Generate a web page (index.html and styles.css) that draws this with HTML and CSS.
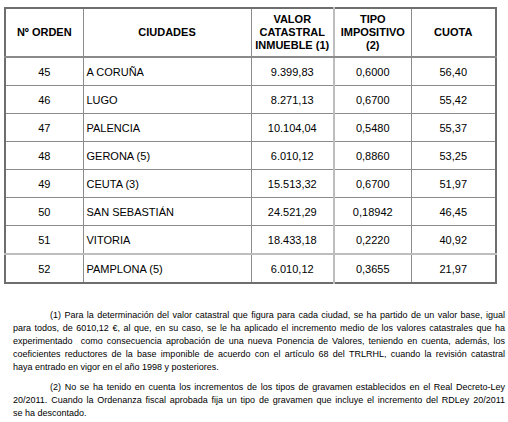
FILE: index.html
```html
<!DOCTYPE html>
<html>
<head>
<meta charset="utf-8">
<link rel="stylesheet" href="styles.css">
</head>
<body>
<div class="page">
<table class="tbl">
  <colgroup>
    <col class="c1"><col class="c2"><col class="c3"><col class="c4"><col class="c5">
  </colgroup>
  <thead>
    <tr>
      <th>Nº ORDEN</th>
      <th>CIUDADES</th>
      <th>VALOR<br>CATASTRAL<br>INMUEBLE (1)</th>
      <th class="sep">TIPO<br>IMPOSITIVO<br>(2)</th>
      <th>CUOTA</th>
    </tr>
  </thead>
  <tbody>
    <tr><td>45</td><td class="city">A CORUÑA</td><td>9.399,83</td><td class="sep">0,6000</td><td>56,40</td></tr>
    <tr><td>46</td><td class="city">LUGO</td><td>8.271,13</td><td class="sep">0,6700</td><td>55,42</td></tr>
    <tr><td>47</td><td class="city">PALENCIA</td><td>10.104,04</td><td class="sep">0,5480</td><td>55,37</td></tr>
    <tr><td>48</td><td class="city">GERONA (5)</td><td>6.010,12</td><td class="sep">0,8860</td><td>53,25</td></tr>
    <tr><td>49</td><td class="city">CEUTA (3)</td><td>15.513,32</td><td class="sep">0,6700</td><td>51,97</td></tr>
    <tr><td>50</td><td class="city">SAN SEBASTIÁN</td><td>24.521,29</td><td class="sep">0,18942</td><td>46,45</td></tr>
    <tr><td>51</td><td class="city">VITORIA</td><td>18.433,18</td><td class="sep">0,2220</td><td>40,92</td></tr>
    <tr class="last"><td>52</td><td class="city">PAMPLONA (5)</td><td>6.010,12</td><td class="sep">0,3655</td><td>21,97</td></tr>
  </tbody>
</table>
<div class="notes">
  <p class="note">
    <span class="ln first">(1) Para la determinación del valor catastral que figura para cada ciudad, se ha partido de un valor base, igual</span>
    <span class="ln">para todos, de 6010,12 €, al que, en su caso, se le ha aplicado el incremento medio de los valores catastrales que ha</span>
    <span class="ln">experimentado&nbsp; como consecuencia aprobación de una nueva Ponencia de Valores, teniendo en cuenta, además, los</span>
    <span class="ln">coeficientes reductores de la base imponible de acuerdo con el artículo 68 del TRLRHL, cuando la revisión catastral</span>
    <span class="ln end">haya entrado en vigor en el año 1998 y posteriores.</span>
  </p>
  <p class="note">
    <span class="ln first">(2) No se ha tenido en cuenta los incrementos de los tipos de gravamen establecidos en el Real Decreto-Ley</span>
    <span class="ln">20/2011. Cuando la Ordenanza fiscal aprobada fija un tipo de gravamen que incluye el incremento del RDLey 20/2011</span>
    <span class="ln end">se ha descontado.</span>
  </p>
</div>
</div>
</body>
</html>
```
FILE: styles.css
```css
html, body {
  margin: 0;
  padding: 0;
  background: #ffffff;
}
.page {
  padding: 7px 0 0 4px;
  font-family: "Liberation Sans", Arial, sans-serif;
  color: #000;
}
.tbl {
  border-collapse: collapse;
  width: 491px;
  table-layout: fixed;
  border: 2px solid #6e6e6e;
  font-size: 11px;
}
.c1 { width: 78px; }
.c2 { width: 168px; }
.c3 { width: 83px; }
.c4 { width: 77px; }
.c5 { width: 85px; }
.tbl th, .tbl td {
  border: 1px solid #8c8c8c;
  padding: 0;
  text-align: center;
  vertical-align: middle;
}
.tbl th {
  height: 47px;
  font-weight: bold;
  line-height: 13px;
  border-bottom: 2px solid #8a8a8a;
}
.tbl td {
  height: 27px;
}
.tbl td.city {
  text-align: left;
  padding-left: 3px;
}
.tbl .sep {
  border-left: 2px solid #bdbdbd;
}
.tbl tr.last td {
  border-top: 2px solid #bdbdbd;
}
.notes {
  margin: 25px 0 0 9px;
  width: 492px;
  font-size: 9px;
  line-height: 13px;
}
.note {
  margin: 0 0 7px 0;
}
.ln {
  display: block;
  white-space: nowrap;
  text-align: justify;
  text-align-last: justify;
}
.ln.first {
  padding-left: 37px;
}
.ln.end {
  text-align-last: left;
}
```
